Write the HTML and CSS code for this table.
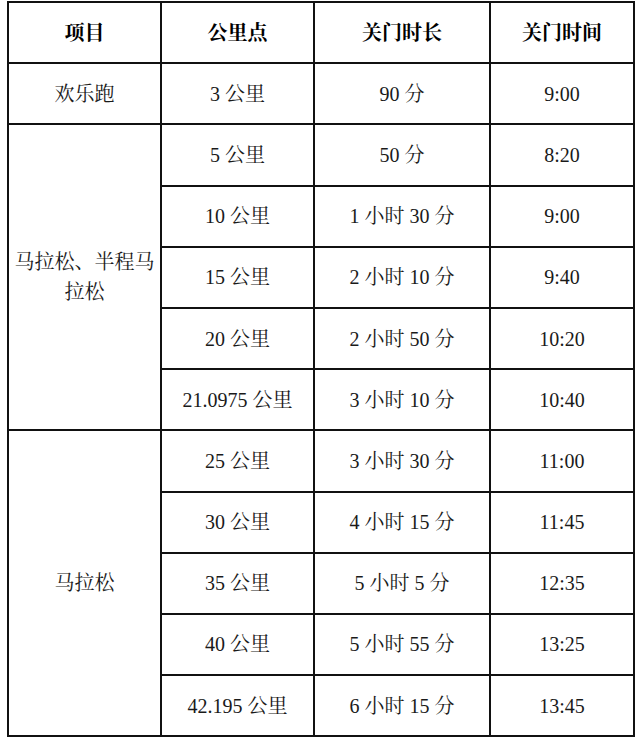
FILE: index.html
```html
<!DOCTYPE html>
<html lang="zh-CN">
<head>
<meta charset="utf-8">
<title>关门时间</title>
<link rel="stylesheet" href="styles.css">
</head>
<body>
<table class="cutoff">
  <colgroup>
    <col class="c1"><col class="c2"><col class="c3"><col class="c4">
  </colgroup>
  <thead>
    <tr><th>项目</th><th>公里点</th><th>关门时长</th><th>关门时间</th></tr>
  </thead>
  <tbody>
    <tr><td>欢乐跑</td><td>3 公里</td><td>90 分</td><td>9:00</td></tr>
    <tr><td rowspan="5" class="wrap">马拉松、半程马拉松</td><td>5 公里</td><td>50 分</td><td>8:20</td></tr>
    <tr><td>10 公里</td><td>1 小时 30 分</td><td>9:00</td></tr>
    <tr><td>15 公里</td><td>2 小时 10 分</td><td>9:40</td></tr>
    <tr><td>20 公里</td><td>2 小时 50 分</td><td>10:20</td></tr>
    <tr><td>21.0975 公里</td><td>3 小时 10 分</td><td>10:40</td></tr>
    <tr><td rowspan="5">马拉松</td><td>25 公里</td><td>3 小时 30 分</td><td>11:00</td></tr>
    <tr><td>30 公里</td><td>4 小时 15 分</td><td>11:45</td></tr>
    <tr><td>35 公里</td><td>5 小时 5 分</td><td>12:35</td></tr>
    <tr><td>40 公里</td><td>5 小时 55 分</td><td>13:25</td></tr>
    <tr><td>42.195 公里</td><td>6 小时 15 分</td><td>13:45</td></tr>
  </tbody>
</table>
</body>
</html>
```
FILE: styles.css
```css
html, body {
  margin: 0;
  padding: 0;
  background: #fff;
}
body {
  padding: 1px 0 0 7px;
}
.cutoff {
  border-collapse: collapse;
  table-layout: fixed;
  width: 626px;
  font-family: "Liberation Serif", "Noto Serif CJK SC", "Noto Sans CJK SC", serif;
  font-size: 20px;
  color: #1a1a1a;
}
.c1 { width: 153px; }
.c2 { width: 153px; }
.c3 { width: 176px; }
.c4 { width: 144px; }
.cutoff th,
.cutoff td {
  border: 2px solid #111;
  height: 59.2px;
  padding: 0;
  text-align: center;
  vertical-align: middle;
  line-height: 30px;
}
.cutoff th {
  font-weight: bold;
  color: #000;
}
.cutoff td.wrap {
  padding: 0;
}
```
